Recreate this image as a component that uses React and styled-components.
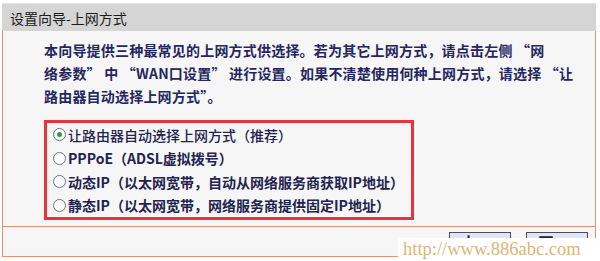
import React, { useState } from "react";
import styled, { createGlobalStyle } from "styled-components";

const GlobalStyle = createGlobalStyle`
  html, body {
    margin: 0;
    padding: 0;
    background: #ffffff;
  }
  body {
    font-family: "Noto Sans CJK SC", "DejaVu Sans", sans-serif;
  }
`;

const Page = styled.div`
  position: relative;
  width: 600px;
  height: 261px;
  overflow: hidden;
  background: #ffffff;
  padding: 3px 4px 0 2px;
  box-sizing: border-box;
`;

const TitleBar = styled.div`
  height: 28px;
  display: flex;
  align-items: center;
  padding-left: 8px;
  background: #d5d5d5;
  border-top: 1px solid #e4e4e4;
  box-sizing: border-box;
  font-size: 14px;
  color: #1c1c1c;
`;

const Panel = styled.div`
  background: #f6f6f6;
  border-left: 1px solid #e29274;
  border-right: 1px solid #e29274;
`;

const Content = styled.div`
  height: 195px;
  padding: 8px 0 0 41px;
  box-sizing: border-box;
`;

const Intro = styled.p`
  margin: 0;
  font-size: 14px;
  line-height: 23px;
  font-weight: 700;
  letter-spacing: 0.2px;
  color: #26265e;
`;

const OptionBox = styled.div`
  margin-top: 12px;
  width: 370px;
  height: 100px;
  border: 3px solid #e5343a;
  box-sizing: border-box;
  padding: 0 0 0 6px;
  display: flex;
  flex-direction: column;
  justify-content: center;
`;

const OptionRow = styled.label`
  height: 24px;
  display: flex;
  align-items: center;
  gap: 2px;
  font-size: 14px;
  font-weight: ${(p) => (p.$light ? 500 : 700)};
  color: #22224e;
  cursor: pointer;
`;

const Radio = styled.span`
  width: 13px;
  height: 13px;
  border-radius: 50%;
  border: 1px solid #66708a;
  background: #ffffff;
  box-sizing: border-box;
  display: flex;
  align-items: center;
  justify-content: center;
  flex-shrink: 0;

  &::after {
    content: "";
    width: 5px;
    height: 5px;
    border-radius: 50%;
    background: ${(p) => (p.$checked ? "#2f9a3c" : "transparent")};
  }
`;

const Footer = styled.div`
  height: 31px;
  border-top: 1px solid #e29274;
  border-bottom: 1px solid #e29274;
  box-sizing: border-box;
  display: flex;
  align-items: flex-start;
  justify-content: flex-end;
  gap: 15px;
  padding: 5px 7px 0 0;
`;

const StepButton = styled.button`
  width: 62px;
  height: 22px;
  padding: 1px 0 0;
  display: flex;
  align-items: flex-start;
  justify-content: center;
  background: #dde6f4;
  border: 1px solid #4c4c4c;
  font-family: "Noto Sans CJK SC", sans-serif;
  font-size: 15px;
  line-height: 15px;
  font-weight: 700;
  letter-spacing: 7px;
  text-indent: 7px;
  color: #1e1e40;
`;

const Watermark = styled.div`
  position: absolute;
  left: 398px;
  top: 238px;
  width: 202px;
  height: 23px;
  background: #ffffff;
  display: flex;
  align-items: center;
  padding-left: 5px;
  box-sizing: border-box;
  font-family: "Liberation Serif", serif;
  font-size: 18.5px;
  color: #d8b67c;
`;

const options = [
  "让路由器自动选择上网方式（推荐）",
  "PPPoE（ADSL虚拟拨号）",
  "动态IP（以太网宽带，自动从网络服务商获取IP地址）",
  "静态IP（以太网宽带，网络服务商提供固定IP地址）",
];

export default function App() {
  const [selected, setSelected] = useState(0);

  return (
    <>
      <GlobalStyle />
      <Page>
        <TitleBar>设置向导-上网方式</TitleBar>
        <Panel>
          <Content>
            <Intro>
              本向导提供三种最常见的上网方式供选择。若为其它上网方式，请点击左侧 “网
              <br />
              络参数” 中 “WAN口设置” 进行设置。如果不清楚使用何种上网方式，请选择 “让
              <br />
              路由器自动选择上网方式”。
            </Intro>
            <OptionBox>
              {options.map((text, i) => (
                <OptionRow key={i} $light={i === 0} onClick={() => setSelected(i)}>
                  <Radio $checked={selected === i} />
                  {text}
                </OptionRow>
              ))}
            </OptionBox>
          </Content>
          <Footer>
            <StepButton>上一步</StepButton>
            <StepButton>下一步</StepButton>
          </Footer>
        </Panel>
        <Watermark>http://www.886abc.com</Watermark>
      </Page>
    </>
  );
}
